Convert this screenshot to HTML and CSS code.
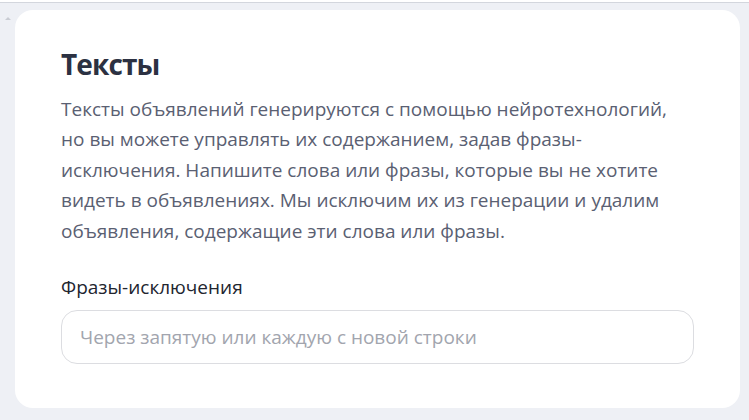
FILE: index.html
```html
<!DOCTYPE html>
<html lang="ru">
<head>
<meta charset="utf-8">
<link rel="stylesheet" href="styles.css">
</head>
<body>
<div class="topline"></div>
<div class="page">
  <div class="scroll-arrow"></div>
  <section class="card">
    <h2 class="title">Тексты</h2>
    <p class="desc">Тексты объявлений генерируются с помощью нейротехнологий, но вы можете управлять их содержанием, задав фразы-исключения. Напишите слова или фразы, которые вы не хотите видеть в объявлениях. Мы исключим их из генерации и удалим объявления, содержащие эти слова или фразы.</p>
    <label class="label" for="ex">Фразы-исключения</label>
    <div class="field"><input id="ex" class="input" type="text" placeholder="Через запятую или каждую с новой строки"></div>
  </section>
</div>
</body>
</html>
```
FILE: styles.css
```css
html, body { margin: 0; padding: 0; }
body {
  width: 749px;
  height: 420px;
  overflow: hidden;
  background: #eef0f5;
  font-family: "Open Sans", "Noto Sans", sans-serif;
}
.topline {
  height: 2px;
  background: #ffffff;
  border-bottom: 1px solid #d3d6dd;
}
.page {
  display: flex;
  padding: 7px 9px 12px 0;
  height: 398px;
  box-sizing: content-box;
}
.scroll-arrow {
  width: 15px;
  position: relative;
}
.scroll-arrow::before {
  content: "";
  position: absolute;
  left: 5px;
  top: 7px;
  border-left: 3px solid transparent;
  border-right: 3px solid transparent;
  border-bottom: 3px solid #c9ccd3;
}
.card {
  flex: 1;
  background: #ffffff;
  border-radius: 18px;
  padding: 38px 46px 0 46px;
  box-sizing: border-box;
  height: 398px;
}
.title {
  margin: 0;
  font-size: 28px;
  line-height: 32px;
  letter-spacing: -0.9px;
  font-weight: 700;
  color: #2c3142;
}
.desc {
  margin: 13.5px 0 0 0;
  font-size: 19px;
  line-height: 30.5px;
  color: #5a6072;
}
.label {
  display: block;
  margin-top: 29px;
  font-size: 19px;
  line-height: 24px;
  color: #22252f;
}
.field {
  margin-top: 10.5px;
}
.input {
  display: block;
  width: 100%;
  height: 54px;
  box-sizing: border-box;
  border: 1px solid #dcdde1;
  border-radius: 16px;
  padding: 0 18px;
  font-family: inherit;
  font-size: 19px;
  color: #22252f;
  background: #fff;
  outline: none;
}
.input::placeholder { color: #a2a5ae; }
```
